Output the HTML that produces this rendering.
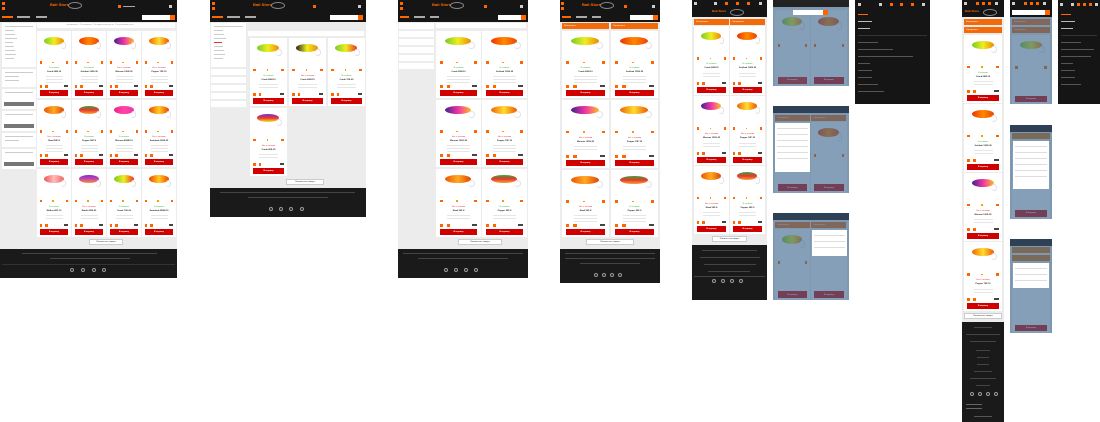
<!DOCTYPE html>
<html><head><meta charset="utf-8">
<style>
*{margin:0;padding:0;box-sizing:border-box}
body{width:1100px;height:422px;background:#fff;position:relative;overflow:hidden;font-family:"Liberation Sans","Noto Sans CJK SC",sans-serif;font-size:2px;color:#222}
.pn{position:absolute;background:#ececec;overflow:hidden}
.hd{position:absolute;left:0;right:0;top:0;background:#151515}
.ft{position:absolute;left:0;right:0;background:#1a1a1a}
.ft i{position:absolute;width:4px;height:4px;border-radius:50%;border:1px solid #999}
.ft s{position:absolute;height:1px;background:#555;text-decoration:none}
.lg{position:absolute;color:#f60;font-weight:bold;font-size:4px}
.lg:after{content:"";position:absolute;left:18px;top:0;width:12px;height:5px;border:1px solid #888;border-radius:50%}
.sr{position:absolute;background:#fff;height:5px}
.sr:after{content:"";position:absolute;right:0;top:0;width:5px;height:5px;background:#f60}
.c{position:absolute;background:#fff}
.c .f{position:absolute;left:20%;top:9%;width:58%;height:12%;border-radius:50%}
.c .f:after{content:"";position:absolute;right:-15%;top:60%;width:22%;height:60%;border:1px solid #e2e2e2;border-radius:50%;border-left:none}
.c .q{position:absolute;top:45%;width:7%;height:4%;background:#f60}
.c .l{left:8%}.c .r{right:8%}
.c .dt{position:absolute;left:45%;top:46%;width:4%;height:2%;background:#f90}
.c .s{position:absolute;left:0;right:0;top:54%;text-align:center;font-size:2px}
.g{color:#3b3}.rd{color:#e33}
.c .n{position:absolute;left:0;right:0;top:60%;text-align:center;font-weight:bold;font-size:2.2px}
.c .d{position:absolute;left:25%;right:25%;top:66%;height:11%;background:repeating-linear-gradient(#fff 0 1px,#ccc 1px 1.6px,#fff 1.6px 3px)}
.c .m1{position:absolute;left:8%;top:81%;width:7%;height:4%;background:#f60}
.c .m2{position:absolute;left:24%;top:81%;width:7%;height:4%;background:#f60}
.c .p{position:absolute;right:8%;top:81%;width:12%;height:3%;background:#444}
.c .b{position:absolute;left:8%;right:8%;top:88%;height:9%;background:#d10000;color:#fff;text-align:center;font-size:2px;display:flex;align-items:center;justify-content:center}
.sb{position:absolute;background:#fff}
.sb p{height:1px;background:#ccc;margin:3px 3px 0}
.gb{position:absolute;background:#777;height:4px}
.bar{position:absolute;background:#f26a0a;height:6px;color:#fff;font-size:2px;padding:2px}
.sa{position:absolute;background:#fff;border:1px solid #ccc;height:6px;font-size:2px;text-align:center;line-height:4px}
.ov{position:absolute;left:0;right:0;top:0;bottom:0;background:rgba(60,100,140,.62)}
.mn{position:absolute;background:#151515}
.mn p{height:1px;background:#555;margin:6px 3px 0}
.mn p.o{background:#f60;width:10px}
.ic{position:absolute;top:3px;width:3px;height:3px;background:#f60}
.ic.w{background:#ccc}
.drop{position:absolute;background:#fff}
.drop p{height:5px;border-bottom:1px solid #ddd;margin:1px 2px}
</style></head><body>

<!-- PANEL 1 -->
<div class="pn" style="left:0;top:0;width:177px;height:278px">
<div class="hd" style="height:22px">
<div class="ic" style="left:2px;top:2px"></div><div class="ic" style="left:2px;top:7px"></div>
<div class="lg" style="left:50px;top:2px">Bait Store</div>
<div class="ic" style="left:118px;top:5px"></div><div style="position:absolute;left:123px;top:6px;width:12px;height:1px;background:#aaa"></div>
<div class="ic w" style="left:169px;top:5px"></div>
<div style="position:absolute;left:2px;top:16px;width:11px;height:2px;background:#f60"></div>
<div style="position:absolute;left:17px;top:16px;width:13px;height:2px;background:#aaa"></div>
<div style="position:absolute;left:36px;top:16px;width:11px;height:2px;background:#aaa"></div>
<div class="sr" style="left:142px;top:15px;width:33px"></div>
</div>
<div class="sb" style="left:2px;top:23px;width:34px;height:44px"><p></p><p style="width:9px"></p><p style="width:10px"></p><p style="width:12px"></p><p style="width:8px"></p><p style="width:9px"></p><p style="width:10px"></p><p style="width:11px"></p><p style="width:9px"></p></div>
<div class="sb" style="left:2px;top:69px;width:34px;height:18px"><p></p><p style="width:14px"></p><p style="width:14px"></p></div>
<div class="sb" style="left:2px;top:89px;width:34px;height:20px"><p></p></div><div class="gb" style="left:4px;top:102px;width:30px"></div>
<div class="sb" style="left:2px;top:111px;width:34px;height:20px"><p></p></div><div class="gb" style="left:4px;top:124px;width:30px"></div>
<div class="sb" style="left:2px;top:133px;width:34px;height:14px"><p></p><p style="width:14px"></p></div>
<div class="sb" style="left:2px;top:149px;width:34px;height:20px"><p></p></div><div class="gb" style="left:4px;top:162px;width:30px"></div>
<div style="position:absolute;left:37px;top:23px;width:138px;height:5px;background:#fff;font-size:2px;color:#999;padding:1px 29px">Сортировать &nbsp; По названию &nbsp; По возрастанию цены &nbsp; По убыванию цены</div>
<div class="c" style="left:37px;top:31px;width:34px;height:67px"><i class="f" style="background:linear-gradient(90deg,#7c2,#ee2,#e80)"></i><b class="q l"></b><b class="q r"></b><b class="dt"></b><p class="s g">В наличии</p><p class="n">Crank 50M-10</p><b class="d"></b><b class="m1"></b><b class="m2"></b><b class="p"></b><b class="b">В корзину</b></div>
<div class="c" style="left:72px;top:31px;width:34px;height:67px"><i class="f" style="background:linear-gradient(90deg,#e30,#f80,#e40)"></i><b class="q l"></b><b class="q r"></b><b class="dt"></b><p class="s g">В наличии</p><p class="n">Jerkbait 120S-30</p><b class="d"></b><b class="m1"></b><b class="m2"></b><b class="p"></b><b class="b">В корзину</b></div>
<div class="c" style="left:107px;top:31px;width:34px;height:67px"><i class="f" style="background:linear-gradient(90deg,#428,#e3a,#fb2)"></i><b class="q l"></b><b class="q r"></b><b class="dt"></b><p class="s rd">Нет в наличии</p><p class="n">Minnow 120S-25</p><b class="d"></b><b class="m1"></b><b class="m2"></b><b class="p"></b><b class="b">В корзину</b></div>
<div class="c" style="left:142px;top:31px;width:34px;height:67px"><i class="f" style="background:linear-gradient(90deg,#e60,#fd3,#e50)"></i><b class="q l"></b><b class="q r"></b><b class="dt"></b><p class="s rd">Нет в наличии</p><p class="n">Popper 70F-15</p><b class="d"></b><b class="m1"></b><b class="m2"></b><b class="p"></b><b class="b">В корзину</b></div>
<div class="c" style="left:37px;top:100px;width:34px;height:67px"><i class="f" style="background:linear-gradient(90deg,#e50,#fa2,#d40)"></i><b class="q l"></b><b class="q r"></b><b class="dt"></b><p class="s rd">Нет в наличии</p><p class="n">Shad 50F-8</p><b class="d"></b><b class="m1"></b><b class="m2"></b><b class="p"></b><b class="b">В корзину</b></div>
<div class="c" style="left:72px;top:100px;width:34px;height:67px"><i class="f" style="background:linear-gradient(#3a3,#e33,#ea3)"></i><b class="q l"></b><b class="q r"></b><b class="dt"></b><p class="s g">В наличии</p><p class="n">Popper 50F-5</p><b class="d"></b><b class="m1"></b><b class="m2"></b><b class="p"></b><b class="b">В корзину</b></div>
<div class="c" style="left:107px;top:100px;width:34px;height:67px"><i class="f" style="background:linear-gradient(90deg,#e28,#f4a,#e3a)"></i><b class="q l"></b><b class="q r"></b><b class="dt"></b><p class="s g">В наличии</p><p class="n">Minnow 80SR-10</p><b class="d"></b><b class="m1"></b><b class="m2"></b><b class="p"></b><b class="b">В корзину</b></div>
<div class="c" style="left:142px;top:100px;width:34px;height:67px"><i class="f" style="background:linear-gradient(90deg,#e40,#fc2,#e40)"></i><b class="q l"></b><b class="q r"></b><b class="dt"></b><p class="s rd">Нет в наличии</p><p class="n">Swimbait 150S-25</p><b class="d"></b><b class="m1"></b><b class="m2"></b><b class="p"></b><b class="b">В корзину</b></div>
<div class="c" style="left:37px;top:169px;width:34px;height:68px"><i class="f" style="background:linear-gradient(90deg,#e55,#fbb,#e66)"></i><b class="q l"></b><b class="q r"></b><b class="dt"></b><p class="s g">В наличии</p><p class="n">Walker 80F-10</p><b class="d"></b><b class="m1"></b><b class="m2"></b><b class="p"></b><b class="b">В корзину</b></div>
<div class="c" style="left:72px;top:169px;width:34px;height:68px"><i class="f" style="background:linear-gradient(#73c,#c4a,#e93)"></i><b class="q l"></b><b class="q r"></b><b class="dt"></b><p class="s rd">Нет в наличии</p><p class="n">Rattlin 58S-20</p><b class="d"></b><b class="m1"></b><b class="m2"></b><b class="p"></b><b class="b">В корзину</b></div>
<div class="c" style="left:107px;top:169px;width:34px;height:68px"><i class="f" style="background:linear-gradient(90deg,#7c2,#ee2,#e32)"></i><b class="q l"></b><b class="q r"></b><b class="dt"></b><p class="s g">В наличии</p><p class="n">Crank 70S-20</p><b class="d"></b><b class="m1"></b><b class="m2"></b><b class="p"></b><b class="b">В корзину</b></div>
<div class="c" style="left:142px;top:169px;width:34px;height:68px"><i class="f" style="background:linear-gradient(90deg,#e40,#fc2,#e40)"></i><b class="q l"></b><b class="q r"></b><b class="dt"></b><p class="s g">В наличии</p><p class="n">Swimbait 090M-15</p><b class="d"></b><b class="m1"></b><b class="m2"></b><b class="p"></b><b class="b">В корзину</b></div>
<div class="sa" style="left:89px;top:239px;width:34px">Показать все товары</div>
<div class="ft" style="top:249px;height:29px"><s style="left:22px;top:4px;width:135px;background:#444"></s><s style="left:50px;top:9px;width:80px;background:#444"></s><s style="left:2px;top:15px;width:173px;background:#333"></s>
<i style="left:70px;top:19px"></i><i style="left:81px;top:19px"></i><i style="left:92px;top:19px"></i><i style="left:102px;top:19px"></i></div>
</div>

<!-- PANEL 2 -->
<div class="pn" style="left:210px;top:0;width:156px;height:217px">
<div class="hd" style="height:22px"><div class="ic" style="left:2px;top:2px"></div><div class="ic" style="left:2px;top:7px"></div><div class="lg" style="left:43px;top:2px">Bait Store</div><div class="ic" style="left:103px;top:5px"></div><div class="ic w" style="left:148px;top:5px"></div>
<div style="position:absolute;left:2px;top:16px;width:11px;height:2px;background:#f60"></div><div style="position:absolute;left:17px;top:16px;width:13px;height:2px;background:#aaa"></div><div style="position:absolute;left:35px;top:16px;width:11px;height:2px;background:#aaa"></div><div class="sr" style="left:120px;top:15px;width:33px"></div></div>
<div class="sb" style="left:1px;top:23px;width:35px;height:44px"><p></p><p style="width:9px"></p><p style="width:10px"></p><p style="width:12px"></p><p style="width:8px;background:#e33"></p><p style="width:9px"></p><p style="width:10px"></p><p style="width:11px"></p><p style="width:9px"></p></div>
<div class="sb" style="left:1px;top:69px;width:35px;height:6px"></div><div class="sb" style="left:1px;top:77px;width:35px;height:6px"></div><div class="sb" style="left:1px;top:85px;width:35px;height:6px"></div><div class="sb" style="left:1px;top:93px;width:35px;height:6px"></div><div class="sb" style="left:1px;top:101px;width:35px;height:6px"></div>
<div style="position:absolute;left:38px;top:31px;width:116px;height:5px;background:#fff"></div>
<div class="c" style="left:40px;top:38px;width:37px;height:68px"><i class="f" style="background:linear-gradient(90deg,#7c2,#ee2,#e80)"></i><b class="q l"></b><b class="q r"></b><b class="dt"></b><p class="s g">В наличии</p><p class="n">Crank 50M-10</p><b class="d"></b><b class="m1"></b><b class="m2"></b><b class="p"></b><b class="b">В корзину</b></div>
<div class="c" style="left:79px;top:38px;width:37px;height:68px"><i class="f" style="background:linear-gradient(90deg,#222,#ee2,#e80)"></i><b class="q l"></b><b class="q r"></b><b class="dt"></b><p class="s rd">Нет в наличии</p><p class="n">Crank 60M-15</p><b class="d"></b><b class="m1"></b><b class="m2"></b><b class="p"></b><b class="b">В корзину</b></div>
<div class="c" style="left:118px;top:38px;width:37px;height:68px"><i class="f" style="background:linear-gradient(90deg,#7c2,#ee2,#e32)"></i><b class="q l"></b><b class="q r"></b><b class="dt"></b><p class="s g">В наличии</p><p class="n">Crank 70S-20</p><b class="d"></b><b class="m1"></b><b class="m2"></b><b class="p"></b><b class="b">В корзину</b></div>
<div class="c" style="left:40px;top:108px;width:37px;height:68px"><i class="f" style="background:linear-gradient(#73c,#e33,#ee2)"></i><b class="q l"></b><b class="q r"></b><b class="dt"></b><p class="s rd">Нет в наличии</p><p class="n">Crank 80S-25</p><b class="d"></b><b class="m1"></b><b class="m2"></b><b class="p"></b><b class="b">В корзину</b></div>
<div class="sa" style="left:76px;top:179px;width:38px">Показать все товары</div>
<div class="ft" style="top:188px;height:29px"><s style="left:10px;top:4px;width:135px;background:#444"></s><s style="left:38px;top:9px;width:80px;background:#444"></s>
<i style="left:59px;top:19px"></i><i style="left:69px;top:19px"></i><i style="left:79px;top:19px"></i><i style="left:90px;top:19px"></i></div>
</div>

<!-- PANEL 3 -->
<div class="pn" style="left:398px;top:0;width:130px;height:278px">
<div class="hd" style="height:22px"><div class="ic" style="left:2px;top:2px"></div><div class="ic" style="left:2px;top:7px"></div><div class="lg" style="left:34px;top:2px">Bait Store</div><div class="ic" style="left:86px;top:5px"></div><div class="ic w" style="left:122px;top:5px"></div>
<div style="position:absolute;left:2px;top:16px;width:9px;height:2px;background:#f60"></div><div style="position:absolute;left:16px;top:16px;width:11px;height:2px;background:#aaa"></div><div style="position:absolute;left:32px;top:16px;width:9px;height:2px;background:#aaa"></div><div class="sr" style="left:100px;top:15px;width:28px"></div></div>
<div class="sb" style="left:1px;top:23px;width:35px;height:6px"></div><div class="sb" style="left:1px;top:31px;width:35px;height:6px"></div><div class="sb" style="left:1px;top:39px;width:35px;height:6px"></div><div class="sb" style="left:1px;top:47px;width:35px;height:6px"></div><div class="sb" style="left:1px;top:55px;width:35px;height:6px"></div><div class="sb" style="left:1px;top:63px;width:35px;height:6px"></div>
<div style="position:absolute;left:38px;top:23px;width:90px;height:5px;background:#fff"></div>
<div class="c" style="left:38px;top:31px;width:45px;height:67px"><i class="f" style="background:linear-gradient(90deg,#7c2,#ee2,#e80)"></i><b class="q l"></b><b class="q r"></b><b class="dt"></b><p class="s g">В наличии</p><p class="n">Crank 50M-10</p><b class="d"></b><b class="m1"></b><b class="m2"></b><b class="p"></b><b class="b">В корзину</b></div>
<div class="c" style="left:84px;top:31px;width:45px;height:67px"><i class="f" style="background:linear-gradient(90deg,#e30,#f80,#e40)"></i><b class="q l"></b><b class="q r"></b><b class="dt"></b><p class="s g">В наличии</p><p class="n">Jerkbait 120S-30</p><b class="d"></b><b class="m1"></b><b class="m2"></b><b class="p"></b><b class="b">В корзину</b></div>
<div class="c" style="left:38px;top:100px;width:45px;height:67px"><i class="f" style="background:linear-gradient(90deg,#428,#e3a,#fb2)"></i><b class="q l"></b><b class="q r"></b><b class="dt"></b><p class="s rd">Нет в наличии</p><p class="n">Minnow 120S-25</p><b class="d"></b><b class="m1"></b><b class="m2"></b><b class="p"></b><b class="b">В корзину</b></div>
<div class="c" style="left:84px;top:100px;width:45px;height:67px"><i class="f" style="background:linear-gradient(90deg,#e60,#fd3,#e50)"></i><b class="q l"></b><b class="q r"></b><b class="dt"></b><p class="s rd">Нет в наличии</p><p class="n">Popper 70F-15</p><b class="d"></b><b class="m1"></b><b class="m2"></b><b class="p"></b><b class="b">В корзину</b></div>
<div class="c" style="left:38px;top:169px;width:45px;height:68px"><i class="f" style="background:linear-gradient(90deg,#e50,#fa2,#d40)"></i><b class="q l"></b><b class="q r"></b><b class="dt"></b><p class="s rd">Нет в наличии</p><p class="n">Shad 50F-8</p><b class="d"></b><b class="m1"></b><b class="m2"></b><b class="p"></b><b class="b">В корзину</b></div>
<div class="c" style="left:84px;top:169px;width:45px;height:68px"><i class="f" style="background:linear-gradient(#3a3,#e33,#ea3)"></i><b class="q l"></b><b class="q r"></b><b class="dt"></b><p class="s g">В наличии</p><p class="n">Popper 50F-5</p><b class="d"></b><b class="m1"></b><b class="m2"></b><b class="p"></b><b class="b">В корзину</b></div>
<div class="sa" style="left:60px;top:239px;width:44px">Показать все товары</div>
<div class="ft" style="top:249px;height:29px"><s style="left:5px;top:4px;width:120px;background:#444"></s><s style="left:20px;top:9px;width:90px;background:#444"></s>
<i style="left:46px;top:19px"></i><i style="left:56px;top:19px"></i><i style="left:66px;top:19px"></i><i style="left:76px;top:19px"></i></div>
</div>

<!-- PANEL 4 -->
<div class="pn" style="left:560px;top:0;width:100px;height:283px">
<div class="hd" style="height:22px"><div class="ic" style="left:1px;top:2px"></div><div class="ic" style="left:1px;top:7px"></div><div class="lg" style="left:22px;top:2px">Bait Store</div><div class="ic" style="left:64px;top:5px"></div><div class="ic w" style="left:92px;top:5px"></div>
<div style="position:absolute;left:2px;top:16px;width:9px;height:2px;background:#f60"></div><div style="position:absolute;left:16px;top:16px;width:11px;height:2px;background:#aaa"></div><div style="position:absolute;left:32px;top:16px;width:9px;height:2px;background:#aaa"></div><div class="sr" style="left:70px;top:15px;width:28px"></div></div>
<div class="bar" style="left:2px;top:23px;width:47px">Фильтровать</div><div class="bar" style="left:51px;top:23px;width:47px">Сортировать</div>
<div class="c" style="left:2px;top:31px;width:47px;height:67px"><i class="f" style="background:linear-gradient(90deg,#7c2,#ee2,#e80)"></i><b class="q l"></b><b class="q r"></b><b class="dt"></b><p class="s g">В наличии</p><p class="n">Crank 50M-10</p><b class="d"></b><b class="m1"></b><b class="m2"></b><b class="p"></b><b class="b">В корзину</b></div>
<div class="c" style="left:51px;top:31px;width:47px;height:67px"><i class="f" style="background:linear-gradient(90deg,#e30,#f80,#e40)"></i><b class="q l"></b><b class="q r"></b><b class="dt"></b><p class="s g">В наличии</p><p class="n">Jerkbait 120S-30</p><b class="d"></b><b class="m1"></b><b class="m2"></b><b class="p"></b><b class="b">В корзину</b></div>
<div class="c" style="left:2px;top:100px;width:47px;height:68px"><i class="f" style="background:linear-gradient(90deg,#428,#e3a,#fb2)"></i><b class="q l"></b><b class="q r"></b><b class="dt"></b><p class="s rd">Нет в наличии</p><p class="n">Minnow 120S-25</p><b class="d"></b><b class="m1"></b><b class="m2"></b><b class="p"></b><b class="b">В корзину</b></div>
<div class="c" style="left:51px;top:100px;width:47px;height:68px"><i class="f" style="background:linear-gradient(90deg,#e60,#fd3,#e50)"></i><b class="q l"></b><b class="q r"></b><b class="dt"></b><p class="s rd">Нет в наличии</p><p class="n">Popper 70F-15</p><b class="d"></b><b class="m1"></b><b class="m2"></b><b class="p"></b><b class="b">В корзину</b></div>
<div class="c" style="left:2px;top:170px;width:47px;height:67px"><i class="f" style="background:linear-gradient(90deg,#e50,#fa2,#d40)"></i><b class="q l"></b><b class="q r"></b><b class="dt"></b><p class="s rd">Нет в наличии</p><p class="n">Shad 50F-8</p><b class="d"></b><b class="m1"></b><b class="m2"></b><b class="p"></b><b class="b">В корзину</b></div>
<div class="c" style="left:51px;top:170px;width:47px;height:67px"><i class="f" style="background:linear-gradient(#3a3,#e33,#ea3)"></i><b class="q l"></b><b class="q r"></b><b class="dt"></b><p class="s g">В наличии</p><p class="n">Popper 50F-5</p><b class="d"></b><b class="m1"></b><b class="m2"></b><b class="p"></b><b class="b">В корзину</b></div>
<div class="sa" style="left:26px;top:239px;width:48px">Показать все товары</div>
<div class="ft" style="top:249px;height:34px"><s style="left:5px;top:4px;width:90px;background:#444"></s><s style="left:5px;top:9px;width:90px;background:#444"></s><s style="left:20px;top:14px;width:60px;background:#444"></s>
<i style="left:34px;top:24px"></i><i style="left:42px;top:24px"></i><i style="left:50px;top:24px"></i><i style="left:58px;top:24px"></i></div>
</div>

<!-- MOBILE A -->
<div class="pn" style="left:692px;top:0;width:75px;height:300px">
<div class="hd" style="height:17px"><div class="ic w" style="left:2px;top:2px"></div><div class="ic w" style="left:22px;top:2px"></div><div class="ic" style="left:33px;top:2px"></div><div class="ic" style="left:44px;top:2px"></div><div class="ic" style="left:55px;top:2px"></div><div class="ic w" style="left:67px;top:2px"></div><div class="lg" style="left:20px;top:9px;font-size:3px">Bait Store</div></div>
<div class="bar" style="left:2px;top:19px;width:35px">Фильтровать</div><div class="bar" style="left:38px;top:19px;width:35px">Сортировать</div>
<div class="c" style="left:2px;top:26px;width:35px;height:69px"><i class="f" style="background:linear-gradient(90deg,#7c2,#ee2,#e80)"></i><b class="q l"></b><b class="q r"></b><b class="dt"></b><p class="s g">В наличии</p><p class="n">Crank 50M-10</p><b class="d"></b><b class="m1"></b><b class="m2"></b><b class="p"></b><b class="b">В корзину</b></div>
<div class="c" style="left:38px;top:26px;width:35px;height:69px"><i class="f" style="background:linear-gradient(90deg,#e30,#f80,#e40)"></i><b class="q l"></b><b class="q r"></b><b class="dt"></b><p class="s g">В наличии</p><p class="n">Jerkbait 120S-30</p><b class="d"></b><b class="m1"></b><b class="m2"></b><b class="p"></b><b class="b">В корзину</b></div>
<div class="c" style="left:2px;top:96px;width:35px;height:69px"><i class="f" style="background:linear-gradient(90deg,#428,#e3a,#fb2)"></i><b class="q l"></b><b class="q r"></b><b class="dt"></b><p class="s rd">Нет в наличии</p><p class="n">Minnow 120S-25</p><b class="d"></b><b class="m1"></b><b class="m2"></b><b class="p"></b><b class="b">В корзину</b></div>
<div class="c" style="left:38px;top:96px;width:35px;height:69px"><i class="f" style="background:linear-gradient(90deg,#e60,#fd3,#e50)"></i><b class="q l"></b><b class="q r"></b><b class="dt"></b><p class="s rd">Нет в наличии</p><p class="n">Popper 70F-15</p><b class="d"></b><b class="m1"></b><b class="m2"></b><b class="p"></b><b class="b">В корзину</b></div>
<div class="c" style="left:2px;top:166px;width:35px;height:68px"><i class="f" style="background:linear-gradient(90deg,#e50,#fa2,#d40)"></i><b class="q l"></b><b class="q r"></b><b class="dt"></b><p class="s rd">Нет в наличии</p><p class="n">Shad 50F-8</p><b class="d"></b><b class="m1"></b><b class="m2"></b><b class="p"></b><b class="b">В корзину</b></div>
<div class="c" style="left:38px;top:166px;width:35px;height:68px"><i class="f" style="background:linear-gradient(#3a3,#e33,#ea3)"></i><b class="q l"></b><b class="q r"></b><b class="dt"></b><p class="s g">В наличии</p><p class="n">Popper 50F-5</p><b class="d"></b><b class="m1"></b><b class="m2"></b><b class="p"></b><b class="b">В корзину</b></div>
<div class="sa" style="left:20px;top:236px;width:35px">Показать все товары</div>
<div class="ft" style="top:245px;height:55px"><s style="left:10px;top:5px;width:55px;background:#444"></s><s style="left:8px;top:12px;width:60px;background:#444"></s><s style="left:12px;top:19px;width:52px;background:#444"></s><s style="left:16px;top:26px;width:42px;background:#444"></s><s style="left:2px;top:31px;width:71px;background:#444"></s>
<i style="left:20px;top:34px"></i><i style="left:29px;top:34px"></i><i style="left:38px;top:34px"></i><i style="left:47px;top:34px"></i></div>
</div>

<!-- MOBILE B,C,D overlays -->
<div class="pn" style="left:773px;top:0;width:76px;height:86px">
<div class="c" style="left:2px;top:10px;width:35px;height:76px"><i class="f" style="background:linear-gradient(90deg,#7c2,#ee2,#e80)"></i><b class="q l"></b><b class="q r"></b><b class="b" style="background:#d10">В корзину</b></div>
<div class="c" style="left:38px;top:10px;width:36px;height:76px"><i class="f" style="background:linear-gradient(90deg,#e30,#f80,#e40)"></i><b class="q l"></b><b class="q r"></b><b class="b">В корзину</b></div>
<div class="ov"></div><div class="hd" style="height:7px;background:#222"></div><div class="sr" style="left:20px;top:10px;width:35px"></div></div>

<div class="pn" style="left:773px;top:106px;width:76px;height:87px">
<div class="bar" style="left:2px;top:9px;width:35px">Фильтровать</div><div class="bar" style="left:38px;top:9px;width:35px">Сортировать</div>
<div class="c" style="left:38px;top:16px;width:36px;height:71px"><i class="f" style="background:linear-gradient(90deg,#e30,#f80,#e40)"></i><b class="q l"></b><b class="q r"></b><b class="b">В корзину</b></div>
<div class="c" style="left:2px;top:16px;width:35px;height:71px"><b class="b">В корзину</b></div>
<div class="ov"></div><div class="hd" style="height:7px;background:#2e4055"></div>
<div class="drop" style="left:2px;top:17px;width:35px;height:49px"><p></p><p></p><p></p><p></p><p></p><p></p></div></div>

<div class="pn" style="left:773px;top:213px;width:76px;height:87px">
<div class="bar" style="left:2px;top:9px;width:35px">Фильтровать</div><div class="bar" style="left:38px;top:9px;width:35px">Сортировать</div>
<div class="c" style="left:2px;top:16px;width:35px;height:71px"><i class="f" style="background:linear-gradient(90deg,#7c2,#ee2,#e80)"></i><b class="q l"></b><b class="q r"></b><b class="b">В корзину</b></div>
<div class="c" style="left:38px;top:16px;width:36px;height:71px"><b class="b">В корзину</b></div>
<div class="ov"></div><div class="hd" style="height:7px;background:#2e4055"></div>
<div class="drop" style="left:39px;top:17px;width:35px;height:26px"><p></p><p></p><p></p></div></div>

<!-- MOBILE E menu -->
<div class="mn" style="left:855px;top:0;width:75px;height:104px"><div class="ic w" style="left:3px"></div><div class="ic w" style="left:24px"></div><div class="ic" style="left:35px"></div><div class="ic" style="left:45px"></div><div class="ic" style="left:56px"></div><div class="ic w" style="left:67px"></div>
<div style="height:8px"></div><p class="o"></p><p style="width:14px;background:#bbb"></p><p style="width:12px;background:#bbb"></p><p style="height:1px;background:#333"></p><p style="width:20px"></p><p style="width:35px"></p><p style="width:55px"></p><p style="width:12px"></p><p style="width:14px"></p><p style="width:14px"></p><p style="width:20px"></p><p style="width:26px"></p></div>

<!-- MOBILE F -->
<div class="pn" style="left:962px;top:0;width:42px;height:422px">
<div class="hd" style="height:17px"><div class="ic w" style="left:2px;top:2px"></div><div class="ic" style="left:14px;top:2px"></div><div class="ic" style="left:20px;top:2px"></div><div class="ic" style="left:26px;top:2px"></div><div class="ic w" style="left:33px;top:2px"></div><div class="lg" style="left:3px;top:9px;font-size:3px">Bait Store</div></div>
<div class="bar" style="left:2px;top:19px;width:38px">Фильтровать</div><div class="bar" style="left:2px;top:27px;width:38px">Сортировать</div>
<div class="c" style="left:2px;top:35px;width:38px;height:68px"><i class="f" style="background:linear-gradient(90deg,#7c2,#ee2,#e80)"></i><b class="q l"></b><b class="q r"></b><b class="dt"></b><p class="s g">В наличии</p><p class="n">Crank 50M-10</p><b class="d"></b><b class="m1"></b><b class="m2"></b><b class="p"></b><b class="b">В корзину</b></div>
<div class="c" style="left:2px;top:104px;width:38px;height:68px"><i class="f" style="background:linear-gradient(90deg,#e30,#f80,#e40)"></i><b class="q l"></b><b class="q r"></b><b class="dt"></b><p class="s g">В наличии</p><p class="n">Jerkbait 120S-30</p><b class="d"></b><b class="m1"></b><b class="m2"></b><b class="p"></b><b class="b">В корзину</b></div>
<div class="c" style="left:2px;top:173px;width:38px;height:68px"><i class="f" style="background:linear-gradient(90deg,#428,#e3a,#fb2)"></i><b class="q l"></b><b class="q r"></b><b class="dt"></b><p class="s rd">Нет в наличии</p><p class="n">Minnow 120S-25</p><b class="d"></b><b class="m1"></b><b class="m2"></b><b class="p"></b><b class="b">В корзину</b></div>
<div class="c" style="left:2px;top:242px;width:38px;height:69px"><i class="f" style="background:linear-gradient(90deg,#e60,#fd3,#e50)"></i><b class="q l"></b><b class="q r"></b><b class="dt"></b><p class="s rd">Нет в наличии</p><p class="n">Popper 70F-15</p><b class="d"></b><b class="m1"></b><b class="m2"></b><b class="p"></b><b class="b">В корзину</b></div>
<div class="sa" style="left:2px;top:313px;width:38px">Показать все товары</div>
<div class="ft" style="top:322px;height:100px"><s style="left:12px;top:5px;width:18px;background:#444"></s><s style="left:4px;top:12px;width:34px;background:#444"></s><s style="left:8px;top:19px;width:26px;background:#444"></s><s style="left:14px;top:28px;width:14px;background:#444"></s><s style="left:15px;top:35px;width:12px;background:#444"></s><s style="left:15px;top:42px;width:12px;background:#444"></s><s style="left:12px;top:49px;width:18px;background:#444"></s><s style="left:8px;top:56px;width:26px;background:#444"></s><s style="left:14px;top:63px;width:14px;background:#444"></s>
<i style="left:8px;top:70px"></i><i style="left:16px;top:70px"></i><i style="left:24px;top:70px"></i><i style="left:32px;top:70px"></i><s style="left:4px;top:82px;width:16px;background:#666"></s><s style="left:4px;top:86px;width:16px;background:#666"></s><s style="left:12px;top:94px;width:18px;background:#555"></s></div>
</div>

<!-- MOBILE G -->
<div class="pn" style="left:1010px;top:0;width:42px;height:104px">
<div class="bar" style="left:2px;top:19px;width:38px">Фильтровать</div><div class="bar" style="left:2px;top:27px;width:38px">Сортировать</div>
<div class="c" style="left:2px;top:35px;width:38px;height:69px"><i class="f" style="background:linear-gradient(90deg,#7c2,#ee2,#e80)"></i><b class="q l"></b><b class="q r"></b><b class="b">В корзину</b></div>
<div class="ov"></div><div class="hd" style="height:17px"><div class="ic w" style="left:2px;top:2px"></div><div class="ic" style="left:14px;top:2px"></div><div class="ic" style="left:20px;top:2px"></div><div class="ic" style="left:26px;top:2px"></div><div class="ic w" style="left:33px;top:2px"></div><div class="sr" style="left:2px;top:10px;width:38px"></div></div></div>
<div class="pn" style="left:1010px;top:125px;width:42px;height:94px">
<div class="c" style="left:2px;top:20px;width:38px;height:74px"><b class="b">В корзину</b></div>
<div class="ov"></div><div class="hd" style="height:7px;background:#2e4055"></div>
<div class="bar" style="left:2px;top:8px;width:38px;background:#7a6a5a"></div>
<div class="drop" style="left:3px;top:16px;width:36px;height:48px"><p></p><p></p><p></p><p></p><p></p><p></p></div></div>
<div class="pn" style="left:1010px;top:239px;width:42px;height:94px">
<div class="c" style="left:2px;top:24px;width:38px;height:70px"><b class="b">В корзину</b></div>
<div class="ov"></div><div class="hd" style="height:7px;background:#2e4055"></div>
<div class="bar" style="left:2px;top:8px;width:38px;background:#7a6a5a"></div><div class="bar" style="left:2px;top:16px;width:38px;background:#7a6a5a"></div>
<div class="drop" style="left:3px;top:24px;width:36px;height:25px"><p></p><p></p><p></p></div></div>

<!-- MOBILE J menu -->
<div class="mn" style="left:1058px;top:0;width:42px;height:104px"><div class="ic w" style="left:2px"></div><div class="ic w" style="left:13px"></div><div class="ic" style="left:19px"></div><div class="ic" style="left:25px"></div><div class="ic" style="left:31px"></div><div class="ic w" style="left:37px"></div>
<div style="height:8px"></div><p class="o"></p><p style="width:14px;background:#bbb"></p><p style="width:12px;background:#bbb"></p><p style="background:#333"></p><p style="width:20px"></p><p style="width:33px"></p><p style="width:30px"></p><p style="width:12px"></p><p style="width:14px"></p><p style="width:14px"></p><p style="width:20px"></p></div>

</body></html>
